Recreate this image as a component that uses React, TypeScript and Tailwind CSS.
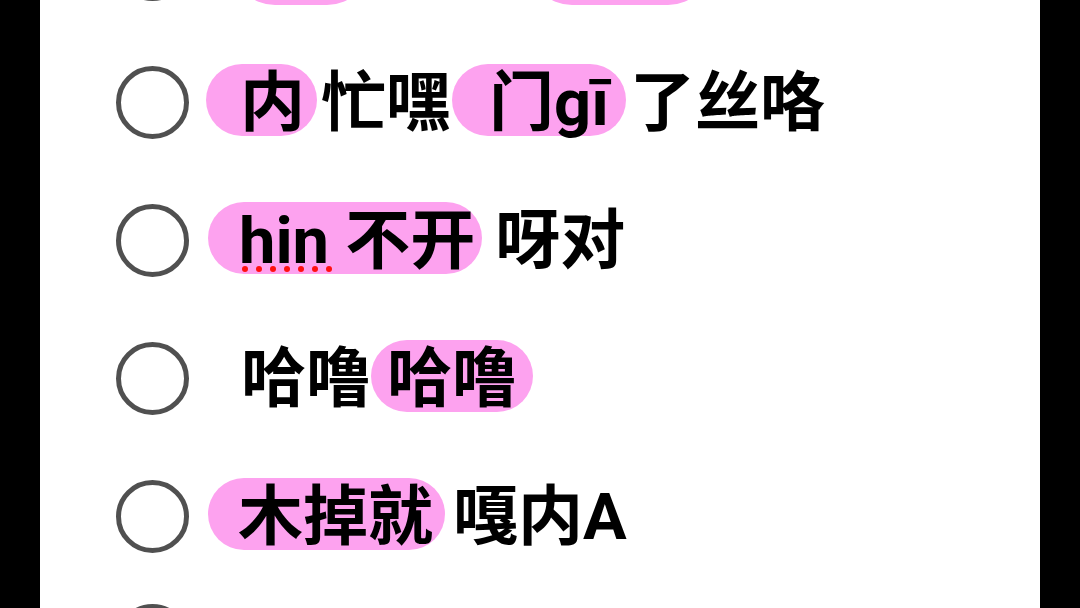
import React from 'react';

const pill = 'flex h-[72px] items-center rounded-full bg-[#fda2ef] pt-[6px] mb-[5px]';
const plain = 'flex h-[72px] items-center pt-[6px] mb-[5px]';
const tallPill = 'flex h-[86px] items-center rounded-full bg-[#fda2ef] pt-[6px] mb-[5px]';

function Radio() {
  return <div className="ml-[76px] h-[73px] w-[73px] shrink-0 rounded-full border-[5px] border-[#505050]" />;
}

function Row({ children, className = '' }: { children: React.ReactNode; className?: string }) {
  return (
    <div className={`flex h-[138px] shrink-0 items-center ${className}`}>
      <Radio />
      <div className="ml-[17px] flex items-center whitespace-pre">{children}</div>
    </div>
  );
}

function Squiggle() {
  // spell-check dots under "hin"
  return (
    <span className="absolute left-[3px] top-[100%] -mt-[11px] flex gap-[8px]">
      {[0, 1, 2, 3, 4, 5, 6].map((i) => (
        <span key={i} className="h-[6px] w-[6px] rounded-full bg-[#ff1010]" />
      ))}
    </span>
  );
}

export default function App() {
  return (
    <div className="flex h-[608px] w-[1080px] justify-center bg-black">
      <div
        className="flex h-[608px] w-[1000px] flex-col overflow-hidden bg-white text-[65px] font-bold leading-[72px] text-black"
        style={{ fontFamily: 'Roboto, "Noto Sans CJK SC", sans-serif' }}
      >
        <div className="-mt-[105px] flex flex-col">
          <Row>
            <span className={`${tallPill} ml-[26px] w-[138px] justify-center`}>就是</span>
            <span className={`${plain} w-[159px] justify-center`}>我们</span>
            <span className={`${tallPill} w-[182px] justify-end pr-[10px]`}>快乐g</span>
            <span className={`${plain} ml-[28px]`}>，好，</span>
          </Row>
          <Row>
            <span className={`${pill} pl-[34px] pr-[12px]`}>内</span>
            <span className={`${plain} pl-[4px]`}>忙嘿</span>
            <span className={`${pill} ml-[1px] pl-[37px] pr-[17px]`}>门gī</span>
            <span className={`${plain} pl-[4px]`}>了丝咯</span>
          </Row>
          <Row>
            <span className={`${pill} ml-[2px] pl-[31px] pr-[7px]`}>
              <span className="relative">
                hin
                <Squiggle />
              </span>
              <span> 不开</span>
            </span>
            <span className={`${plain} pl-[13px]`}>呀对</span>
          </Row>
          <Row>
            <span className={`${plain} pl-[35px]`}>哈噜</span>
            <span className={`${pill} pl-[16px] pr-[16px]`}>哈噜</span>
          </Row>
          <Row>
            <span className={`${pill} ml-[2px] pl-[30px] pr-[12px]`}>木掉就</span>
            <span className={`${plain} pl-[8px]`}>嘎内A</span>
          </Row>
          <Row className="-mt-[14px]">
            <span className="flex h-[72px] items-center pt-[30px] pl-[34px]">好的</span>
          </Row>
        </div>
      </div>
    </div>
  );
}
